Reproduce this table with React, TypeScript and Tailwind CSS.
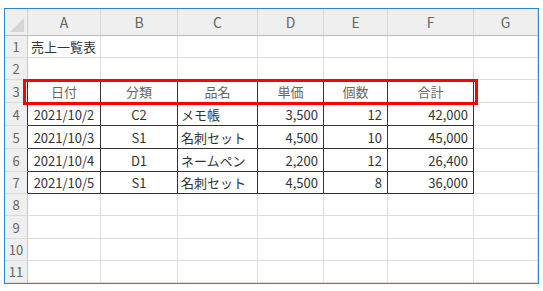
const cols = [
  { key: 'A', w: 'w-[73px]' },
  { key: 'B', w: 'w-[77px]' },
  { key: 'C', w: 'w-[80px]' },
  { key: 'D', w: 'w-[66px]' },
  { key: 'E', w: 'w-[64px]' },
  { key: 'F', w: 'w-[86px]' },
  { key: 'G', w: 'w-[64px]' },
]

const rowHeights = ['h-[22px]', 'h-[22px]', 'h-[23px]', 'h-[23px]', 'h-[23px]', 'h-[23px]', 'h-[22px]', 'h-[22px]', 'h-[23px]', 'h-[22px]', 'h-[22px]']

type Cell = { text: string; align?: 'left' | 'center' | 'right'; head?: boolean }

const table: Cell[][] = [
  [
    { text: '日付', align: 'center', head: true },
    { text: '分類', align: 'center', head: true },
    { text: '品名', align: 'center', head: true },
    { text: '単価', align: 'center', head: true },
    { text: '個数', align: 'center', head: true },
    { text: '合計', align: 'center', head: true },
  ],
  [
    { text: '2021/10/2', align: 'center' },
    { text: 'C2', align: 'center' },
    { text: 'メモ帳' },
    { text: '3,500', align: 'right' },
    { text: '12', align: 'right' },
    { text: '42,000', align: 'right' },
  ],
  [
    { text: '2021/10/3', align: 'center' },
    { text: 'S1', align: 'center' },
    { text: '名刺セット' },
    { text: '4,500', align: 'right' },
    { text: '10', align: 'right' },
    { text: '45,000', align: 'right' },
  ],
  [
    { text: '2021/10/4', align: 'center' },
    { text: 'D1', align: 'center' },
    { text: 'ネームペン' },
    { text: '2,200', align: 'right' },
    { text: '12', align: 'right' },
    { text: '26,400', align: 'right' },
  ],
  [
    { text: '2021/10/5', align: 'center' },
    { text: 'S1', align: 'center' },
    { text: '名刺セット' },
    { text: '4,500', align: 'right' },
    { text: '8', align: 'right' },
    { text: '36,000', align: 'right' },
  ],
]

const alignClass = { left: 'justify-start pl-[3px]', center: 'justify-center', right: 'justify-end pr-[5px]' }

function GridCell({ row, col }: { row: number; col: number }) {
  const w = cols[col].w
  // table body is rows 3..7, cols A..F
  const inTable = row >= 3 && row <= 7 && col <= 5
  const aboveTable = row === 2 && col <= 5
  const cell = inTable ? table[row - 3][col] : null

  let border = 'border-r border-b border-[#dcdcdc]'
  if (inTable) border = 'border-r border-b border-[#333333]'
  else if (aboveTable) border = 'border-r border-b border-r-[#dcdcdc] border-b-[#333333]'

  return (
    <div className={`${w} shrink-0 h-full flex items-center ${border} ${cell ? alignClass[cell.align ?? 'left'] : ''}`}>
      {row === 1 && col === 0 && <span className="pl-[3px] whitespace-nowrap text-[#333]">売上一覧表</span>}
      {cell && <span className={`whitespace-nowrap ${cell.head ? 'text-[#666]' : 'text-[#333]'}`}>{cell.text}</span>}
    </div>
  )
}

export default function App() {
  return (
    <div
      className="relative w-[543px] h-[291px] bg-white pl-[4px] pt-[8px] text-[13px] leading-none"
      style={{ fontFamily: '"Noto Sans CJK JP", "Noto Sans", sans-serif' }}
    >
      <div className="w-[535px] border border-[#2b86d6] bg-white">
        {/* column headers */}
        <div className="flex h-[27px] bg-[#efefef] border-b border-[#bdbdbd]">
          <div className="w-[23px] shrink-0 h-full border-r border-[#d0d0d0] relative">
            <svg className="absolute right-[3px] bottom-[3px]" width="14" height="14" viewBox="0 0 14 14">
              <polygon points="14,0 14,14 0,14" fill="#d6d6d6" />
            </svg>
          </div>
          {cols.map((c) => (
            <div key={c.key} className={`${c.w} shrink-0 h-full flex items-center justify-center border-r border-[#d8d8d8] text-[#666] text-[14px]`}>
              {c.key}
            </div>
          ))}
        </div>
        {rowHeights.map((h, i) => {
          const row = i + 1
          const darkEdge = row >= 3 && row <= 7
          return (
            <div key={row} className={`flex ${h}`}>
              <div className={`w-[23px] shrink-0 h-full flex items-center justify-center bg-[#efefef] border-b border-b-[#dcdcdc] border-r ${darkEdge ? 'border-r-[#333]' : 'border-r-[#c8c8c8]'} text-[#666] text-[13px]`}>
                {row}
              </div>
              {cols.map((c, ci) => (
                <GridCell key={c.key} row={row} col={ci} />
              ))}
            </div>
          )
        })}
      </div>
      <div className="absolute left-[23px] top-[79px] w-[455px] h-[26px] border-[3px] border-[#ff0000]" />
    </div>
  )
}
